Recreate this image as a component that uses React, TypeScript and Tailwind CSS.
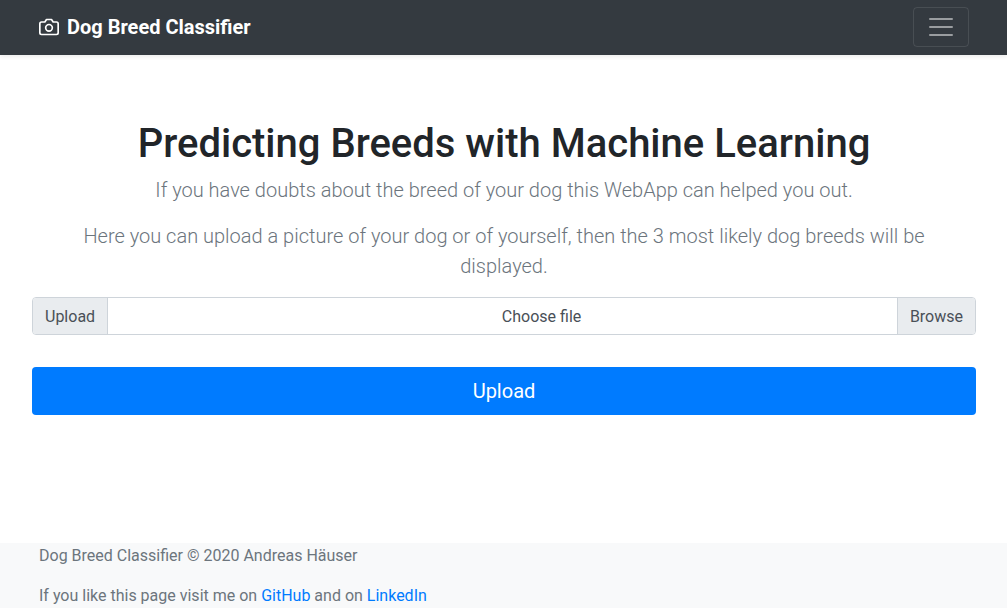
import { useState } from "react";

function CameraIcon() {
  return (
    <svg
      className="mr-2 size-5"
      viewBox="0 0 24 24"
      fill="none"
      stroke="currentColor"
      strokeWidth="2"
      strokeLinecap="round"
      strokeLinejoin="round"
      aria-hidden="true"
    >
      <path d="M23 19a2 2 0 0 1-2 2H3a2 2 0 0 1-2-2V8a2 2 0 0 1 2-2h4l2-3h6l2 3h4a2 2 0 0 1 2 2z" />
      <circle cx="12" cy="13" r="4" />
    </svg>
  );
}

function Header() {
  return (
    <header className="bg-[#343a40] pt-[7px] pb-2 shadow-[0_2px_4px_rgba(0,0,0,0.075)]">
      <div className="mx-auto flex max-w-[961px] items-center justify-between pr-[15px] pl-4">
        <a href="#" className="flex items-center text-xl leading-[30px] font-bold text-white">
          <CameraIcon />
          Dog Breed Classifier
        </a>
        <button
          type="button"
          aria-label="Toggle navigation"
          className="rounded border border-white/10 px-3 py-1"
        >
          <svg className="size-[30px]" viewBox="0 0 30 30" aria-hidden="true">
            <path
              stroke="rgba(255,255,255,0.5)"
              strokeLinecap="round"
              strokeMiterlimit="10"
              strokeWidth="2"
              d="M4 7h22M4 15h22M4 23h22"
            />
          </svg>
        </button>
      </div>
    </header>
  );
}

function UploadForm() {
  const [fileName, setFileName] = useState("Choose file");

  return (
    <form onSubmit={(event) => event.preventDefault()}>
      <div className="flex h-[38px] rounded border border-[#ced4da] text-base leading-6 text-[#495057]">
        <span className="flex items-center rounded-l-[3px] border-r border-[#ced4da] bg-[#e9ecef] px-3 pt-0.5">
          Upload
        </span>
        <label
          htmlFor="dog-picture"
          className="relative flex flex-1 cursor-pointer items-center justify-center rounded-r-[3px] pt-0.5 focus-within:ring-3 focus-within:ring-[#007bff]/25"
        >
          {fileName}
          <span className="absolute inset-y-0 right-0 flex items-center rounded-r-[3px] border-l border-[#ced4da] bg-[#e9ecef] px-3 pt-0.5">
            Browse
          </span>
          <input
            id="dog-picture"
            type="file"
            accept="image/*"
            className="sr-only"
            onChange={(event) => setFileName(event.target.files?.[0]?.name ?? "Choose file")}
          />
        </label>
      </div>
      <button
        type="submit"
        className="mt-8 w-full rounded bg-[#007bff] py-[9px] text-xl leading-[30px] text-white hover:bg-[#0069d9]"
      >
        Upload
      </button>
    </form>
  );
}

export default function App() {
  return (
    <div className="bg-white font-[Roboto,sans-serif] text-base leading-6 text-[#212529]">
      <Header />
      <main className="mx-auto max-w-[961px] pt-[65px] pr-2 pb-32 pl-[9px] text-center">
        <div className="px-4">
          <h1 className="mb-[7px] text-[40px] leading-[48px] font-medium">
            Predicting Breeds with Machine Learning
          </h1>
          <p className="mb-4 text-xl leading-[30px] font-light text-[#6c757d]">
            If you have doubts about the breed of your dog this WebApp can helped you out.
          </p>
          <p className="mb-4 text-xl leading-[30px] font-light text-[#6c757d]">
            Here you can upload a picture of your dog or of yourself, then the 3 most likely dog
            breeds will be displayed.
          </p>
        </div>
        <UploadForm />
      </main>
      <footer className="bg-[#f8f9fa] pt-px text-[#6c757d]">
        <div className="mx-auto max-w-[961px] pr-[15px] pl-4">
          <p className="mb-4">Dog Breed Classifier © 2020 Andreas Häuser</p>
          <p>
            If you like this page visit me on{" "}
            <a href="https://github.com" className="text-[#007bff] hover:underline">
              GitHub
            </a>{" "}
            and on{" "}
            <a href="https://www.linkedin.com" className="text-[#007bff] hover:underline">
              LinkedIn
            </a>
          </p>
        </div>
      </footer>
    </div>
  );
}
